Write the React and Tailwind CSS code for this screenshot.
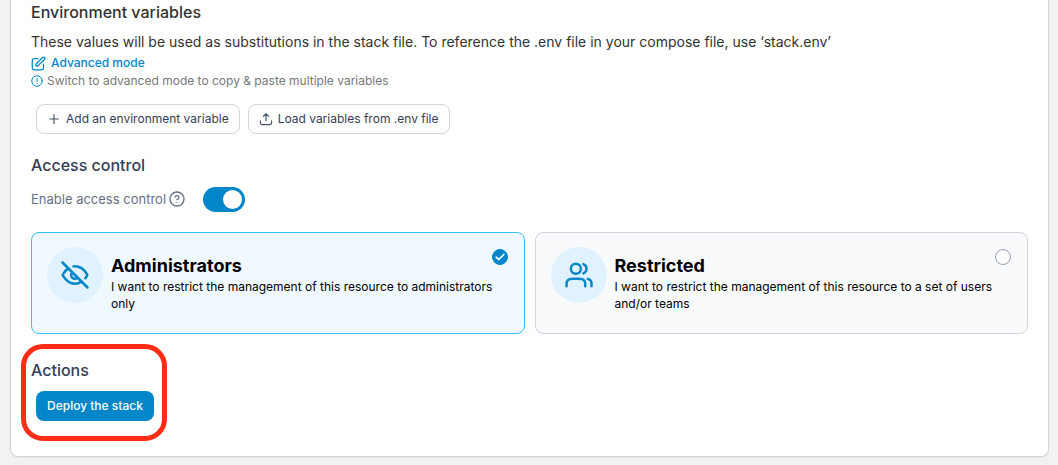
import React, { useState } from "react";

function Icon({ size, stroke = 2, className, children }) {
  return (
    <svg
      width={size}
      height={size}
      viewBox="0 0 24 24"
      fill="none"
      stroke="currentColor"
      strokeWidth={stroke}
      strokeLinecap="round"
      strokeLinejoin="round"
      aria-hidden="true"
      className={`shrink-0 ${className || ""}`}
    >
      {children}
    </svg>
  );
}

function SectionTitle({ children }) {
  return <h2 className="text-base leading-6 font-medium text-[#344054]">{children}</h2>;
}

function OutlineButton({ icon, children }) {
  return (
    <button
      type="button"
      className="flex h-[30px] items-center gap-[5px] rounded-lg border border-[#d0d5dd] bg-white px-[10px] text-xs text-[#344054]"
    >
      {icon}
      {children}
    </button>
  );
}

function AccessOption({ id, title, text, icon, checked, onSelect }) {
  return (
    <label
      htmlFor={id}
      className={`flex min-h-[102px] flex-1 cursor-pointer rounded-lg border pt-[14px] pr-4 pl-[15px] ${
        checked ? "border-[#36bffa] bg-[#f0f9ff]" : "border-[#d0d5dd] bg-[#f9fafb]"
      }`}
    >
      <span className="flex size-14 shrink-0 items-center justify-center rounded-full bg-[#e0f2fe] text-[#0086c9]">
        {icon}
      </span>
      <span className="ml-2 flex-1 pt-[7px] text-black">
        <span className="block text-lg leading-6 font-bold">{title}</span>
        <span className="block text-xs leading-[17px]">{text}</span>
      </span>
      <span className="relative -ml-4 mt-[2px] size-4 shrink-0">
        <input
          id={id}
          type="radio"
          name="ownership"
          checked={checked}
          onChange={onSelect}
          className="block size-4 appearance-none rounded-full border border-[#98a2b3] bg-white checked:border-[#0086c9] checked:bg-[#0086c9]"
        />
        {checked && (
          <svg
            viewBox="0 0 16 16"
            fill="none"
            stroke="white"
            strokeWidth="1.5"
            strokeLinecap="round"
            strokeLinejoin="round"
            aria-hidden="true"
            className="pointer-events-none absolute inset-0 size-4"
          >
            <path d="M12 5.2 6.8 10.6 4.2 8.1" />
          </svg>
        )}
      </span>
    </label>
  );
}

export default function App() {
  const [enabled, setEnabled] = useState(true);
  const [owner, setOwner] = useState("administrators");

  return (
    <div className="min-h-screen bg-[#f2f2f2] pr-[9px] pb-2 pl-[10px] font-['Inter',sans-serif]">
      <main className="rounded-b-lg border border-t-0 border-[#d0d5dd] bg-white px-5 pb-[35px] shadow-xs">
        <section>
          <h2 className="text-base leading-6 font-medium text-[#333333]">Environment variables</h2>
          <p className="mt-2 text-sm leading-5 text-[#333333]">
            These values will be used as substitutions in the stack file. To reference the .env file in your compose
            file, use ‘stack.env’
          </p>
          <a href="#advanced" className="mt-[2px] flex h-[18px] w-fit items-center gap-[5px] text-xs font-medium text-[#0086c9]">
            <Icon size={15}>
              <path d="M11 4H6.8c-1.68 0-2.52 0-3.16.33a3 3 0 0 0-1.31 1.31C2 6.28 2 7.12 2 8.8v8.4c0 1.68 0 2.52.33 3.16a3 3 0 0 0 1.31 1.31c.64.33 1.48.33 3.16.33h8.4c1.68 0 2.52 0 3.16-.33a3 3 0 0 0 1.31-1.31c.33-.64.33-1.48.33-3.16V13" />
              <path d="M8 16h1.7c.5 0 .73 0 .96-.06.2-.05.4-.13.58-.24.2-.12.37-.3.72-.64L21.5 5.5a2.12 2.12 0 0 0-3-3L8.94 12.04c-.35.35-.52.52-.64.72-.11.18-.19.38-.24.58C8 13.57 8 13.8 8 14.3z" />
            </Icon>
            Advanced mode
          </a>
          <p className="flex h-[18px] items-center gap-1 text-xs text-[#777777]">
            <Icon size={12} className="text-[#0086c9]">
              <circle cx="12" cy="12" r="10.5" />
              <path d="M12 7v6M12 17h.01" />
            </Icon>
            Switch to advanced mode to copy &amp; paste multiple variables
          </p>
          <div className="mt-[14px] flex gap-2 pl-[5px]">
            <OutlineButton
              icon={
                <Icon size={14} className="text-[#475467]">
                  <path d="M12 4.5v15M4.5 12h15" />
                </Icon>
              }
            >
              Add an environment variable
            </OutlineButton>
            <OutlineButton
              icon={
                <Icon size={14} className="text-[#475467]">
                  <path d="M2.5 15v2.5c0 1.4 0 2.1.3 2.6.2.5.6.8 1.1 1.1.5.3 1.2.3 2.6.3h11c1.4 0 2.1 0 2.6-.3.5-.3.9-.6 1.1-1.1.3-.5.3-1.2.3-2.6V15" />
                  <path d="m16.5 7.5-4.5-4.5-4.5 4.5M12 3v12" />
                </Icon>
              }
            >
              Load variables from .env file
            </OutlineButton>
          </div>
        </section>

        <section className="mt-[19px]">
          <SectionTitle>Access control</SectionTitle>
          <div className="mt-[9px] flex h-[26px] items-center text-[#667085]">
            <label htmlFor="access-control" className="text-[13px] leading-5">Enable access control</label>
            <Icon size={16} className="ml-[3px]">
              <circle cx="12" cy="12" r="10.5" />
              <path d="M9.1 9a3 3 0 0 1 5.83 1c0 2-3 3-3 3M12 17h.01" />
            </Icon>
            <input
              id="access-control"
              type="checkbox"
              role="switch"
              checked={enabled}
              onChange={() => setEnabled(!enabled)}
              className="ml-[18px] h-[25px] w-[42px] cursor-pointer appearance-none rounded-full bg-[#d0d5dd] p-[3px] before:block before:size-[19px] before:rounded-full before:bg-white checked:bg-[#0086c9] checked:before:ml-[17px]"
            />
          </div>
          <div className="mt-5 flex gap-[10px]">
            <AccessOption
              id="administrators"
              title="Administrators"
              text="I want to restrict the management of this resource to administrators only"
              checked={owner === "administrators"}
              onSelect={() => setOwner("administrators")}
              icon={
                <Icon size={30}>
                  <path d="M10.74 5.09C11.15 5.03 11.57 5 12 5c5.1 0 8.45 4.5 9.58 6.29.14.21.2.32.24.49.03.12.03.32 0 .44-.04.17-.1.28-.24.5-.3.47-.76 1.14-1.36 1.86" />
                  <path d="M6.72 6.72c-2.16 1.46-3.63 3.5-4.3 4.57-.14.21-.2.32-.24.49-.03.12-.03.32 0 .44.04.17.1.28.24.49C3.55 14.5 6.9 19 12 19c2.06 0 3.83-.73 5.29-1.72" />
                  <path d="M9.88 9.88a3 3 0 1 0 4.24 4.24M2 2l20 20" />
                </Icon>
              }
            />
            <AccessOption
              id="restricted"
              title="Restricted"
              text="I want to restrict the management of this resource to a set of users and/or teams"
              checked={owner === "restricted"}
              onSelect={() => setOwner("restricted")}
              icon={
                <Icon size={30}>
                  <path d="M22 21v-2a4 4 0 0 0-3-3.87M15.5 3.29a4 4 0 0 1 0 7.42" />
                  <path d="M17 21c0-1.86 0-2.8-.3-3.53a4 4 0 0 0-2.17-2.17C13.8 15 12.86 15 11 15H8c-1.86 0-2.8 0-3.53.3a4 4 0 0 0-2.17 2.17C2 18.2 2 19.14 2 21" />
                  <circle cx="9.5" cy="7" r="4" />
                </Icon>
              }
            />
          </div>
        </section>

        <section className="relative mt-6 w-fit">
          <SectionTitle>Actions</SectionTitle>
          <button
            type="button"
            className="mt-[9px] ml-[5px] block h-[30px] rounded-lg bg-[#0086c9] px-[11px] text-xs font-medium text-white"
          >
            Deploy the stack
          </button>
          <div className="pointer-events-none absolute -top-[14px] -right-[13px] -bottom-5 -left-[10px] rounded-[22px] border-5 border-[#ff2d16]" />
        </section>
      </main>
    </div>
  );
}
